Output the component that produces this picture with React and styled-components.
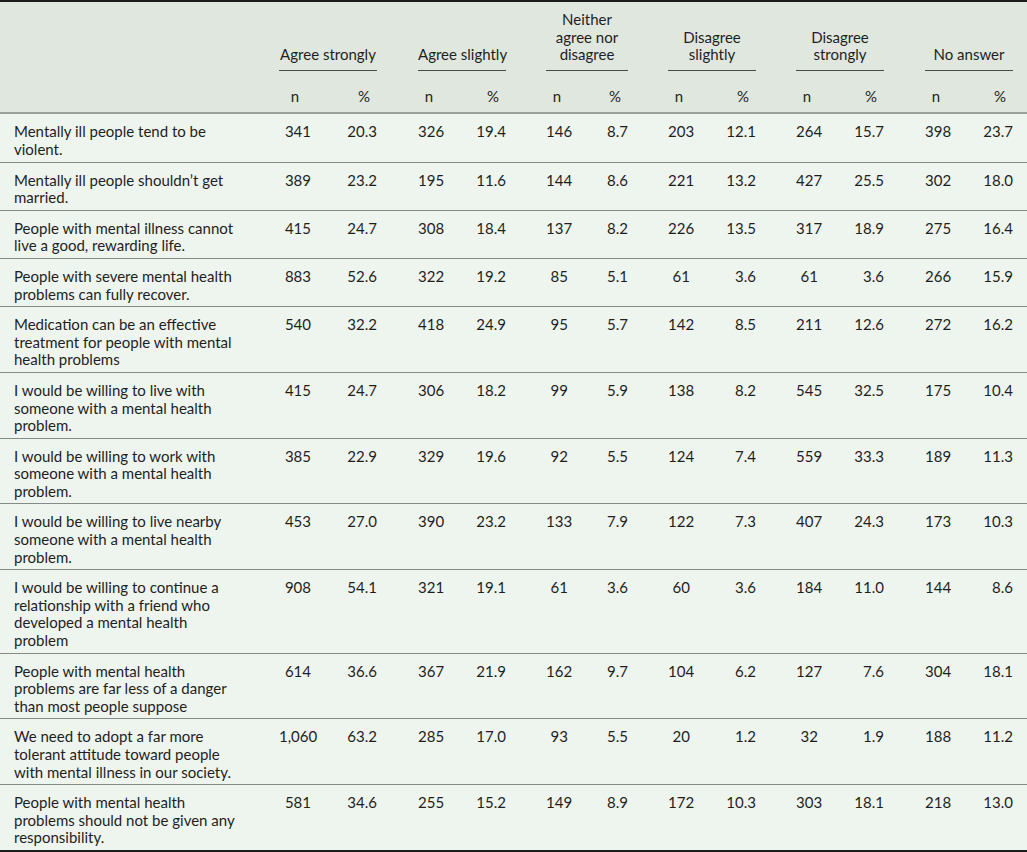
import React from 'react';
import styled, { createGlobalStyle } from 'styled-components';

// column tracks: label | (n, %) per group with 40px gutters between groups
const TRACKS =
  '279px 32px 66px 41px 22px 66px 40px 22px 60px 40px 22px 66px 40px 22px 66px 41px 22px 66px 14px';

// first grid column of each answer group (n column, % is next)
const GROUP_COLS = [2, 5, 8, 11, 14, 17];

const groups = [
  ['Agree strongly'],
  ['Agree slightly'],
  ['Neither', 'agree nor', 'disagree'],
  ['Disagree', 'slightly'],
  ['Disagree', 'strongly'],
  ['No answer'],
];

const rows = [
  { label: ['Mentally ill people tend to be', 'violent.'], values: ['341', '20.3', '326', '19.4', '146', '8.7', '203', '12.1', '264', '15.7', '398', '23.7'] },
  { label: ['Mentally ill people shouldn\u2019t get', 'married.'], values: ['389', '23.2', '195', '11.6', '144', '8.6', '221', '13.2', '427', '25.5', '302', '18.0'] },
  { label: ['People with mental illness cannot', 'live a good, rewarding life.'], values: ['415', '24.7', '308', '18.4', '137', '8.2', '226', '13.5', '317', '18.9', '275', '16.4'] },
  { label: ['People with severe mental health', 'problems can fully recover.'], values: ['883', '52.6', '322', '19.2', '85', '5.1', '61', '3.6', '61', '3.6', '266', '15.9'] },
  { label: ['Medication can be an effective', 'treatment for people with mental', 'health problems'], values: ['540', '32.2', '418', '24.9', '95', '5.7', '142', '8.5', '211', '12.6', '272', '16.2'] },
  { label: ['I would be willing to live with', 'someone with a mental health', 'problem.'], values: ['415', '24.7', '306', '18.2', '99', '5.9', '138', '8.2', '545', '32.5', '175', '10.4'] },
  { label: ['I would be willing to work with', 'someone with a mental health', 'problem.'], values: ['385', '22.9', '329', '19.6', '92', '5.5', '124', '7.4', '559', '33.3', '189', '11.3'] },
  { label: ['I would be willing to live nearby', 'someone with a mental health', 'problem.'], values: ['453', '27.0', '390', '23.2', '133', '7.9', '122', '7.3', '407', '24.3', '173', '10.3'] },
  { label: ['I would be willing to continue a', 'relationship with a friend who', 'developed a mental health', 'problem'], values: ['908', '54.1', '321', '19.1', '61', '3.6', '60', '3.6', '184', '11.0', '144', '8.6'] },
  { label: ['People with mental health', 'problems are far less of a danger', 'than most people suppose'], values: ['614', '36.6', '367', '21.9', '162', '9.7', '104', '6.2', '127', '7.6', '304', '18.1'] },
  { label: ['We need to adopt a far more', 'tolerant attitude toward people', 'with mental illness in our society.'], values: ['1,060', '63.2', '285', '17.0', '93', '5.5', '20', '1.2', '32', '1.9', '188', '11.2'] },
  { label: ['People with mental health', 'problems should not be given any', 'responsibility.'], values: ['581', '34.6', '255', '15.2', '149', '8.9', '172', '10.3', '303', '18.1', '218', '13.0'] },
];

const GlobalStyle = createGlobalStyle`
  body {
    margin: 0;
    background: #eef4ee;
    font-family: Lato, "Noto Sans", sans-serif;
    color: #1f1f1f;
  }
`;

const Table = styled.div`
  width: 1027px;
  border-top: 2px solid #1b1b1b;
  border-bottom: 2px solid #1b1b1b;
  font-size: 15px;
  line-height: 17.6px;
`;

const Head = styled.div`
  background: #dfe7de;
  border-bottom: 2px solid #9ba09b;
`;

const HeadGrid = styled.div`
  display: grid;
  grid-template-columns: ${TRACKS};
  align-items: end;
`;

const GroupLabel = styled.div`
  grid-column: ${p => p.$col} / span 2;
  grid-row: 1;
  text-align: center;
  padding: 9px 0 6px;
  border-bottom: 1px solid #4a4a4a;
  white-space: nowrap;
`;

const SubHead = styled.div`
  grid-column: ${p => p.$col};
  grid-row: 2;
  text-align: ${p => (p.$pct ? 'right' : 'center')};
  padding: 17px ${p => (p.$pct ? '7px' : '0')} 7px 0;
`;

const BodyRow = styled.div`
  display: grid;
  grid-template-columns: ${TRACKS};
  align-items: start;
  padding: 9px 0 3px;
  & + & {
    border-top: 1px solid #868b86;
  }
`;

const Label = styled.div`
  grid-column: 1;
  padding-left: 14px;
  white-space: nowrap;
`;

const Num = styled.div`
  grid-column: ${p => p.$col};
  text-align: right;
  white-space: nowrap;
`;

export default function App() {
  return (
    <>
      <GlobalStyle />
      <Table>
        <Head>
          <HeadGrid>
            {groups.map((g, i) => (
              <GroupLabel key={i} $col={GROUP_COLS[i]}>
                {g.map((line, j) => (
                  <React.Fragment key={j}>
                    {j > 0 && <br />}
                    {line}
                  </React.Fragment>
                ))}
              </GroupLabel>
            ))}
            {GROUP_COLS.map(c => (
              <React.Fragment key={c}>
                <SubHead $col={c}>n</SubHead>
                <SubHead $col={c + 1} $pct>%</SubHead>
              </React.Fragment>
            ))}
          </HeadGrid>
        </Head>
        {rows.map((r, i) => (
          <BodyRow key={i}>
            <Label>
              {r.label.map((line, j) => (
                <React.Fragment key={j}>
                  {j > 0 && <br />}
                  {line}
                </React.Fragment>
              ))}
            </Label>
            {r.values.map((v, k) => (
              <Num key={k} $col={GROUP_COLS[Math.floor(k / 2)] + (k % 2)}>
                {v}
              </Num>
            ))}
          </BodyRow>
        ))}
      </Table>
    </>
  );
}
